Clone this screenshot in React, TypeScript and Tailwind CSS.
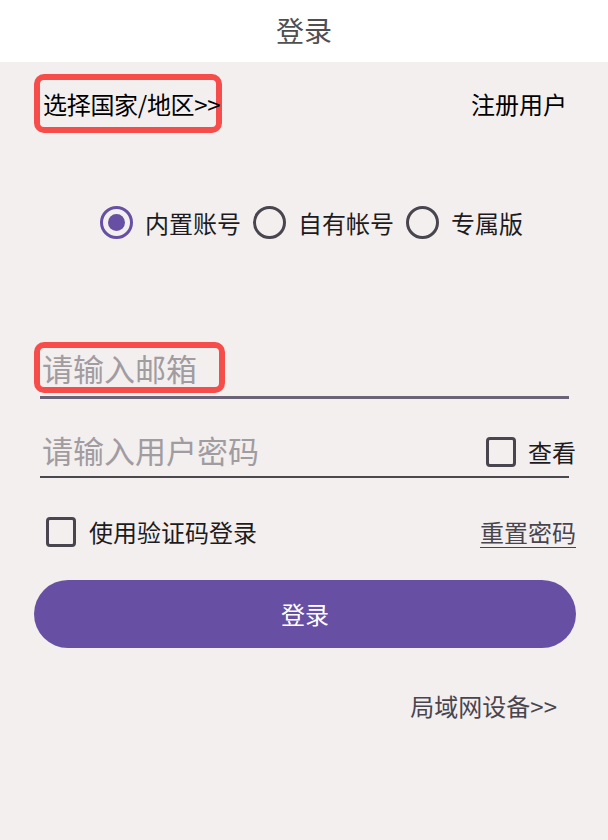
import { useState } from 'react';

type Mode = 'builtin' | 'own' | 'exclusive';

const modes: { key: Mode; label: string }[] = [
  { key: 'builtin', label: '内置账号' },
  { key: 'own', label: '自有帐号' },
  { key: 'exclusive', label: '专属版' },
];

const Radio = ({ checked }: { checked: boolean }) => (
  <span
    className={
      checked
        ? 'flex h-[33px] w-[33px] shrink-0 items-center justify-center rounded-full border-[3.5px] border-[#6750a4]'
        : 'flex h-[33px] w-[33px] shrink-0 items-center justify-center rounded-full border-[3.5px] border-[#49454f]'
    }
  >
    {checked && <span className="h-[17px] w-[17px] rounded-full bg-[#6750a4]" />}
  </span>
);

const Checkbox = ({ checked, onClick }: { checked: boolean; onClick: () => void }) => (
  <span
    onClick={onClick}
    className="flex h-[30px] w-[30px] shrink-0 items-center justify-center rounded-[4px] border-[3px] border-[#49454f]"
  >
    {checked && <span className="h-[14px] w-[14px] bg-[#49454f]" />}
  </span>
);

export default function App() {
  const [mode, setMode] = useState<Mode>('builtin');
  const [showPwd, setShowPwd] = useState(false);
  const [useCode, setUseCode] = useState(false);

  return (
    <div className="min-h-[840px] w-full bg-[#f3efef] font-['Noto_Sans_CJK_SC',sans-serif] text-[#1d1b20]">
      <header className="flex h-[62px] items-center justify-center bg-white pb-[2px] text-[28px] text-[#4f4f4f]">
        登录
      </header>

      {/* country / register */}
      <div className="mt-[12px] flex items-center justify-between pl-[34px] pr-[41px]">
        <div className="flex h-[59px] w-[188px] items-center whitespace-nowrap rounded-[10px] border-[6px] border-[#f64d4b] pl-[3px] text-[24px] text-black">
          <span className="tracking-[-0.3px]">选择国家/地区&gt;&gt;</span>
        </div>
        <span className="text-[24px] text-black">注册用户</span>
      </div>

      {/* account type */}
      <div className="mt-[73px] flex items-center gap-[12px] pl-[100px]">
        {modes.map((m) => (
          <button
            key={m.key}
            onClick={() => setMode(m.key)}
            className="flex h-[33px] items-center gap-[12px] text-[24px] leading-none"
          >
            <Radio checked={mode === m.key} />
            <span>{m.label}</span>
          </button>
        ))}
      </div>

      {/* email */}
      <div className="relative ml-[40px] mr-[39px] mt-[109px] border-b-[3px] border-[#6b6478] pb-[4px]">
        <div className="flex h-[44px] items-center pb-[3px] pl-[2px] text-[31px] text-[#a19c9f]">请输入邮箱</div>
        <div className="absolute -left-[6px] -top-[6px] h-[51px] w-[191px] rounded-[10px] border-[6px] border-[#f64d4b]" />
      </div>

      {/* password */}
      <div className="ml-[40px] mr-[39px] mt-[31px] flex items-center justify-between border-b-2 border-[#4a474d] pb-[2px]">
        <div className="flex h-[44px] items-center pb-[4px] pl-[2px] text-[31px] text-[#a19c9f]">请输入用户密码</div>
        <div className="-mr-[7px] flex items-center gap-[12px] text-[24px]">
          <Checkbox checked={showPwd} onClick={() => setShowPwd(!showPwd)} />
          <span>查看</span>
        </div>
      </div>

      {/* code login / reset */}
      <div className="mt-[39px] flex h-[30px] items-center justify-between pl-[46px] pr-[32px] text-[24px]">
        <div className="flex items-center gap-[13px]">
          <Checkbox checked={useCode} onClick={() => setUseCode(!useCode)} />
          <span>使用验证码登录</span>
        </div>
        <span className="text-[#49454f] underline decoration-1 underline-offset-[5px]">重置密码</span>
      </div>

      <button className="ml-[34px] mt-[33px] flex h-[68px] w-[542px] items-center justify-center rounded-full bg-[#6750a4] text-[24px] text-white">
        登录
      </button>

      <div className="mt-[40px] pr-[51px] text-right text-[24px] text-[#49454f]">局域网设备&gt;&gt;</div>
    </div>
  );
}
